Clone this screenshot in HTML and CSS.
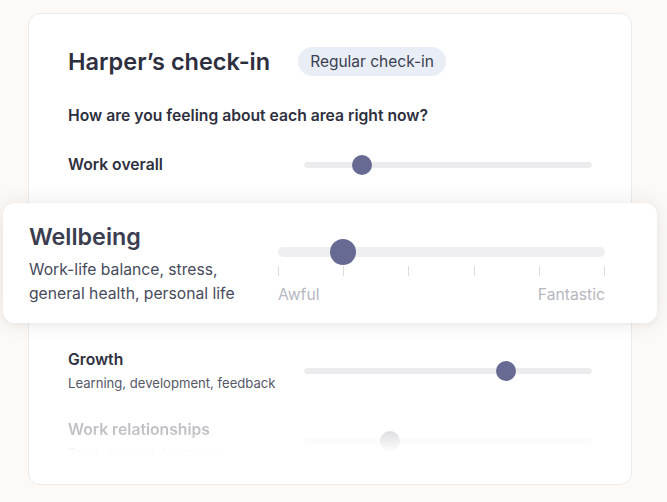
FILE: index.html
```html
<!DOCTYPE html>
<html>
<head>
<meta charset="utf-8">
<link rel="stylesheet" href="styles.css">
</head>
<body>
<div class="card">
  <div class="header">
    <h1 class="title">Harper’s check-in</h1>
    <span class="badge">Regular check-in</span>
  </div>
  <p class="question">How are you feeling about each area right now?</p>

  <div class="row row-single">
    <div class="label">
      <div class="label-title">Work overall</div>
    </div>
    <div class="slider">
      <div class="track"></div>
      <div class="thumb" style="left: 20%"></div>
    </div>
  </div>

  <div class="focus">
    <div class="focus-text">
      <div class="focus-title">Wellbeing</div>
      <div class="focus-desc">Work-life balance, stress,<br>general health, personal life</div>
    </div>
    <div class="focus-slider">
      <div class="slider big">
        <div class="track"></div>
        <div class="thumb" style="left: 20%"></div>
      </div>
      <div class="ticks">
        <span></span><span></span><span></span><span></span><span></span><span></span>
      </div>
      <div class="scale-labels">
        <span>Awful</span><span>Fantastic</span>
      </div>
    </div>
  </div>

  <div class="row row-growth">
    <div class="label">
      <div class="label-title">Growth</div>
      <div class="label-sub">Learning, development, feedback</div>
    </div>
    <div class="slider">
      <div class="track"></div>
      <div class="thumb" style="left: 70%"></div>
    </div>
  </div>

  <div class="row row-faded">
    <div class="label">
      <div class="label-title">Work relationships</div>
      <div class="label-sub">Trust, support, teamwork</div>
    </div>
    <div class="slider">
      <div class="track"></div>
      <div class="thumb" style="left: 30%"></div>
    </div>
  </div>
</div>
</body>
</html>
```

FILE: styles.css
```css
* { box-sizing: border-box; }

html, body {
  margin: 0;
  padding: 0;
}

body {
  width: 667px;
  height: 502px;
  overflow: hidden;
  background: #fdf9f6;
  font-family: Inter, "Noto Sans", "Liberation Sans", sans-serif;
  color: #2e3040;
}

.card {
  width: 604px;
  height: 472px;
  margin: 13px 0 0 28px;
  background: #ffffff;
  border: 1px solid #ebebeb;
  border-radius: 12px;
  padding: 33px 39px 0 39px;
  overflow: visible;
}

.header {
  display: flex;
  align-items: center;
  gap: 28px;
  height: 29px;
}

.title {
  margin: 0;
  font-size: 23.5px;
  line-height: 29px;
  font-weight: 600;
  color: #2d2f3e;
}

.badge {
  height: 29px;
  line-height: 29px;
  padding: 0 12px;
  border-radius: 15px;
  background: #e9eef6;
  font-size: 15.5px;
  color: #3b3e50;
}

.question {
  margin: 30px 0 0 0;
  font-size: 15.7px;
  line-height: 20px;
  font-weight: 600;
  color: #2e3040;
}

.row {
  display: flex;
  align-items: center;
}

.row-single { margin-top: 29px; }
.row-growth { margin-top: 27px; }
.row-faded {
  margin-top: 28px;
  opacity: 0.3;
  -webkit-mask-image: linear-gradient(to bottom, #000 0%, #000 30%, rgba(0,0,0,0.05) 75%, rgba(0,0,0,0) 100%);
  mask-image: linear-gradient(to bottom, #000 0%, #000 30%, rgba(0,0,0,0.05) 75%, rgba(0,0,0,0) 100%);
}

.label {
  width: 236px;
  flex: none;
}

.label-title {
  font-size: 15.7px;
  line-height: 20px;
  font-weight: 600;
  color: #2e3040;
}

.label-sub {
  margin-top: 4px;
  font-size: 13.1px;
  line-height: 18px;
  color: #555766;
}

.slider {
  position: relative;
  flex: 1;
  height: 20px;
  display: flex;
  align-items: center;
}

.track {
  width: 100%;
  height: 6px;
  border-radius: 3px;
  background: #ececee;
}

.thumb {
  position: absolute;
  top: 50%;
  width: 20px;
  height: 20px;
  margin: -10px 0 0 -10px;
  border-radius: 50%;
  background: #676a93;
}

.row-faded .thumb { background: #9a9aa6; }

/* Focused wellbeing card */
.focus {
  display: flex;
  align-items: flex-start;
  height: 120px;
  margin: 28px -65px 0 -65px;
  padding: 20px 52px 0 26px;
  background: #ffffff;
  border-radius: 12px;
  box-shadow: 0 0 22px rgba(30, 30, 50, 0.09), 0 2px 6px rgba(30, 30, 50, 0.04);
  position: relative;
}

.focus-text {
  width: 249px;
  flex: none;
}

.focus-title {
  font-size: 23.3px;
  line-height: 28px;
  font-weight: 600;
  color: #3b3d50;
}

.focus-desc {
  margin-top: 7px;
  font-size: 15.7px;
  line-height: 24px;
  color: #474a5a;
}

.focus-slider {
  flex: 1;
  margin-top: 16px;
}

.slider.big {
  height: 26px;
}

.slider.big .track {
  height: 10px;
  border-radius: 5px;
  background: #efeff1;
}

.slider.big .thumb {
  width: 26px;
  height: 26px;
  margin: -13px 0 0 -13px;
  background: #676a93;
}

.ticks {
  display: flex;
  justify-content: space-between;
  height: 10px;
  margin-top: 1px;
}

.ticks span {
  width: 1px;
  height: 10px;
  background: #dcdcdf;
}

.scale-labels {
  display: flex;
  justify-content: space-between;
  margin-top: 7px;
  font-size: 15.7px;
  line-height: 24px;
  color: #b6b7bf;
}
```
